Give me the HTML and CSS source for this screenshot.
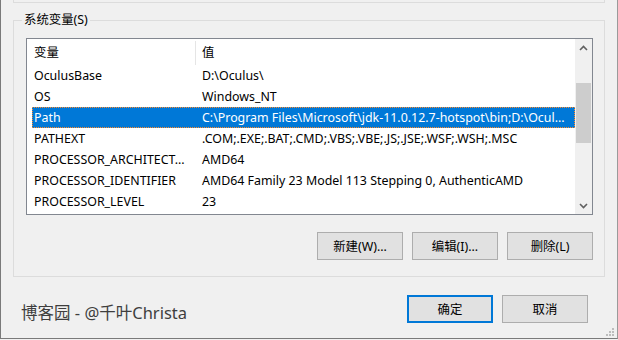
FILE: index.html
```html
<!DOCTYPE html>
<html lang="zh-CN">
<head>
    <meta charset="UTF-8">
    <title>环境变量</title>
    <link rel="stylesheet" href="styles.css">
</head>
<body>
    <div class="window">
        <div class="top-tail"></div>

        <div class="group">
            <div class="group-title">系统变量(S)</div>

            <div class="list">
                <div class="list-body">
                    <div class="list-head">
                        <div class="head-cell first">变量</div>
                        <div class="head-cell">值</div>
                    </div>
                    <div class="row"><span>OculusBase</span><span>D:\Oculus\</span></div>
                    <div class="row"><span>OS</span><span>Windows_NT</span></div>
                    <div class="row selected"><span>Path</span><span>C:\Program Files\Microsoft\jdk-11.0.12.7-hotspot\bin;D:\Ocul...</span></div>
                    <div class="row"><span>PATHEXT</span><span>.COM;.EXE;.BAT;.CMD;.VBS;.VBE;.JS;.JSE;.WSF;.WSH;.MSC</span></div>
                    <div class="row"><span>PROCESSOR_ARCHITECT...</span><span>AMD64</span></div>
                    <div class="row"><span>PROCESSOR_IDENTIFIER</span><span>AMD64 Family 23 Model 113 Stepping 0, AuthenticAMD</span></div>
                    <div class="row"><span>PROCESSOR_LEVEL</span><span>23</span></div>
                </div>
                <div class="scrollbar">
                    <div class="arrow">
                        <svg width="9" height="6" viewBox="0 0 9 6"><polyline points="1,5 4.5,1.5 8,5" fill="none" stroke="#606060" stroke-width="1.6"/></svg>
                    </div>
                    <div class="track"><div class="thumb"></div></div>
                    <div class="arrow">
                        <svg width="9" height="6" viewBox="0 0 9 6"><polyline points="1,1 4.5,4.5 8,1" fill="none" stroke="#606060" stroke-width="1.6"/></svg>
                    </div>
                </div>
            </div>

            <div class="actions">
                <button class="btn">新建(W)...</button>
                <button class="btn">编辑(I)...</button>
                <button class="btn">删除(L)</button>
            </div>
        </div>

        <div class="footer">
            <div class="watermark">博客园 - @千叶Christa</div>
            <div class="footer-buttons">
                <button class="btn default">确定</button>
                <button class="btn">取消</button>
            </div>
        </div>

        <svg class="grip" width="9" height="9" viewBox="0 0 9 9">
            <rect x="6" y="0" width="2" height="2" fill="#bcbcbc"/>
            <rect x="3" y="3" width="2" height="2" fill="#bcbcbc"/>
            <rect x="6" y="3" width="2" height="2" fill="#bcbcbc"/>
            <rect x="0" y="6" width="2" height="2" fill="#bcbcbc"/>
            <rect x="3" y="6" width="2" height="2" fill="#bcbcbc"/>
            <rect x="6" y="6" width="2" height="2" fill="#bcbcbc"/>
        </svg>
    </div>
</body>
</html>
```

FILE: styles.css
```css
body {
    margin: 0;
    padding: 0;
    background-color: #f0f0f0;
    font-family: "Noto Sans", "Noto Sans CJK SC", sans-serif;
    font-size: 12px;
    color: #000;
}
.window {
    position: relative;
    box-sizing: border-box;
    width: 618px;
    height: 339px;
    border-left: 1px solid #7a7a7a;
    border-right: 1px solid #9a9a9a;
    border-bottom: 1px solid #7a7a7a;
}
.top-tail {
    height: 2px;
    margin: 0 12px;
    border: 1px solid #dcdcdc;
    border-top: none;
}
.group {
    margin: 17px 12px 0 12px;
    padding: 0 11px 16px 12px;
    border: 1px solid #dcdcdc;
}
.group-title {
    width: fit-content;
    height: 16px;
    margin: -9px 0 0 -4px;
    padding: 0 2px;
    line-height: 16px;
    font-size: 12.4px;
    background-color: #f0f0f0;
}
.list {
    display: flex;
    height: 175px;
    margin-top: 10px;
    border: 1px solid #828790;
    background-color: #fff;
    font-size: 12.4px;
}
.list-body {
    flex: 1;
    min-width: 0;
    overflow: hidden;
}
.list-head {
    display: flex;
    height: 26px;
    padding-top: 2px;
    box-sizing: border-box;
}
.head-cell {
    line-height: 24px;
    padding-left: 6px;
}
.head-cell.first {
    box-sizing: border-box;
    width: 169px;
    padding-left: 7px;
    border-right: 1px solid #e5e5e5;
}
.row {
    display: grid;
    grid-template-columns: 168px 1fr;
    height: 21px;
    line-height: 21px;
    margin-left: 5px;
    white-space: nowrap;
}
.row span {
    padding-left: 2px;
    overflow: hidden;
}
.row.selected {
    background-color: #0078d7;
    color: #fff;
    outline: 1px dotted #ff8a2a;
    outline-offset: -1px;
}
.scrollbar {
    display: flex;
    flex-direction: column;
    width: 17px;
    background-color: #f0f0f0;
}
.arrow {
    height: 17px;
    display: flex;
    align-items: center;
    justify-content: center;
}
.track {
    flex: 1;
}
.thumb {
    height: 60px;
    margin: 27px 1px 0 1px;
    background-color: #cdcdcd;
}
.actions {
    display: flex;
    justify-content: flex-end;
    gap: 9px;
    margin-top: 17px;
}
.btn {
    box-sizing: border-box;
    width: 86px;
    height: 28px;
    padding: 0;
    border: 1px solid #adadad;
    background-color: #e1e1e1;
    font-family: "Noto Sans", "Noto Sans CJK SC", sans-serif;
    font-size: 12.4px;
    color: #000;
}
.btn.default {
    border: 2px solid #0078d7;
}
.footer {
    display: flex;
    justify-content: space-between;
    margin: 18px 29px 0 20px;
}
.watermark {
    margin-top: 7px;
    font-size: 16.5px;
    line-height: 22px;
    color: #3e3e3e;
}
.footer-buttons {
    display: flex;
    gap: 9px;
}
.grip {
    position: absolute;
    right: 2px;
    bottom: 1px;
}
```
